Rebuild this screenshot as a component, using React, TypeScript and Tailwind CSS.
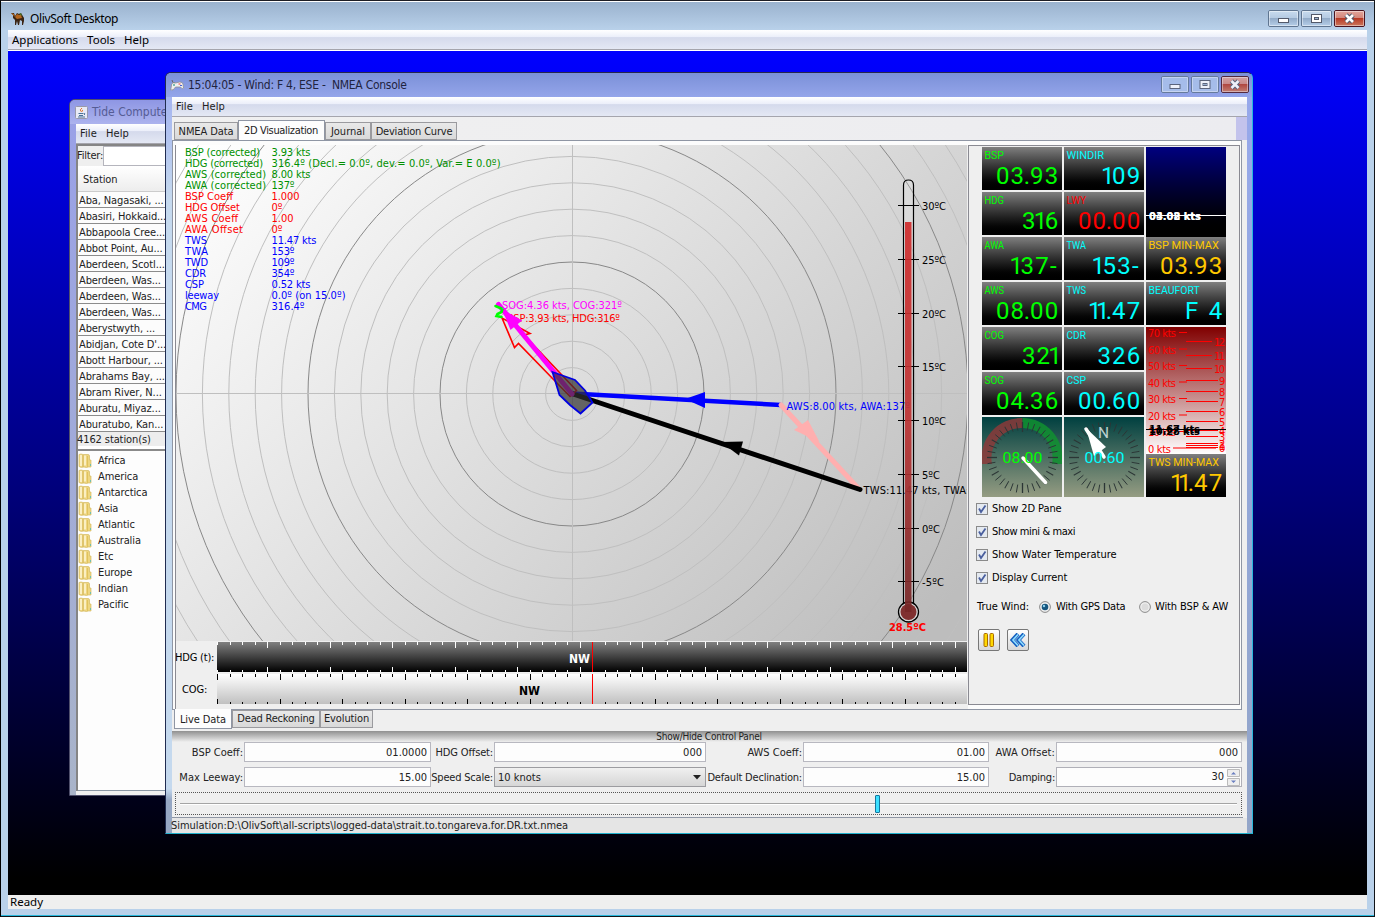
import React from "react";

const stations = [
  "Aba, Nagasaki, ...", "Abasiri, Hokkaid...", "Abbapoola Cree...", "Abbot Point, Au...", "Aberdeen, Scotl...",
  "Aberdeen, Was...", "Aberdeen, Was...", "Aberdeen, Was...", "Aberystwyth, ...", "Abidjan, Cote D'...",
  "Abott Harbour, ...", "Abrahams Bay, ...", "Abram River, N...", "Aburatu, Miyaz...", "Aburatubo, Kan...",
];
const regions = ["Africa", "America", "Antarctica", "Asia", "Atlantic", "Australia", "Etc", "Europe", "Indian", "Pacific"];

const readings: [string, string, string, number, number][] = [
  ["BSP (corrected)", "3.93 kts", "#009000", 75, 39],
  ["HDG (corrected)", "316.4º (Decl.= 0.0º, dev.= 0.0º, Var.= E 0.0º)", "#009000", 78, 229],
  ["AWS (corrected)", "8.00 kts", "#009000", 81, 39],
  ["AWA (corrected)", "137º", "#009000", 81, 23],
  ["BSP Coeff", "1.000", "#ff0000", 48, 28],
  ["HDG Offset", "0º", "#ff0000", 55, 11],
  ["AWS Coeff", "1.00", "#ff0000", 53, 22],
  ["AWA Offset", "0º", "#ff0000", 58, 11],
  ["TWS", "11.47 kts", "#0000ff", 22, 45],
  ["TWA", "153º", "#0000ff", 23, 23],
  ["TWD", "109º", "#0000ff", 23, 23],
  ["CDR", "354º", "#0000ff", 21, 23],
  ["CSP", "0.52 kts", "#0000ff", 19, 39],
  ["leeway", "0.0º (on 15.0º)", "#0000ff", 34, 74],
  ["CMG", "316.4º", "#0000ff", 22, 33],
];

const Camel = () => (
  <svg width="14" height="14" viewBox="0 0 14 14">
    <path d="M0 1l3 0 1 3 2-3 2 1 2-1 3 5v3l-1 4h-1l0-4-2-1-1 5H7L6 9 5 13H4L4 8 2 6 2 3z" fill="#3b2413" />
    <path d="M0 1l3 1 1 3 2-3 2 1 2 0 1 3-5 1z" fill="#b5651d" />
    <path d="M8 2l2-1 1 3z" fill="#4e7a2a" />
  </svg>
);
const Pad = () => (
  <svg width="14" height="13" viewBox="0 0 14 13">
    <path d="M2 1q0 3 3 3" fill="none" stroke="#666" />
    <path d="M.7 11l1-6q1-2 4-1l4-1q3 0 3.300 2l.5 4q-1 2-3-1l-5 0q-2 4-4.800 3z" fill="#f0f0f0" stroke="#8f8f8f" strokeWidth=".8" />
    <path d="M3 6h2M4 5v2" stroke="#5a9" />
    <path d="M8.500 5h2" stroke="#e33" /><path d="M10 6.500h2" stroke="#46d" />
  </svg>
);
const Java = () => (
  <svg width="13" height="13" viewBox="0 0 13 13">
    <rect x=".5" y=".5" width="12" height="12" rx="1" fill="#e8eaf6" stroke="#99a" />
    <path d="M7 2q-3 2-1 3.500M8 4q-2 1-1 2" stroke="#e0762d" fill="none" />
    <path d="M3.500 7.500h5M4 9.500h4M3 11h7M9 7.500q2 0 0 1.500" stroke="#4b7296" fill="none" />
  </svg>
);
const Folder = () => (
  <svg width="14" height="15" viewBox="0 0 14 15">
    <path d="M1 1.500q2-1 4 0h5q1.500 0 1.500 1.500v4h1.500v7h-3q-1 1-4 0-3 1-5-.5z" fill="#eed680" stroke="#d6bc64" strokeWidth=".7" />
    <path d="M5 2v12" stroke="#c9ac50" strokeWidth=".8" />
    <path d="M3 2v11M7 2.500v10" stroke="#fff8d8" strokeWidth="1.500" />
    <path d="M9.500 3v11" stroke="#e0c25e" />
    <path d="M12.500 11v2" stroke="#5bb" strokeWidth=".8" />
  </svg>
);

const WinButtons = ({ inner = false }: { inner?: boolean }) => (
  <svg width={inner ? 89 : 98} height="18" viewBox={inner ? "0 0 89 18" : "0 0 98 18"}>
    <defs>
      <linearGradient id="wb" x1="0" y1="0" x2="0" y2="1">
        <stop offset="0" stopColor="#c9dcef" /><stop offset=".48" stopColor="#b4cae2" /><stop offset=".5" stopColor="#93acc9" /><stop offset="1" stopColor="#b7d0ea" />
      </linearGradient>
      <linearGradient id="wr" x1="0" y1="0" x2="0" y2="1">
        <stop offset="0" stopColor="#e3a79d" /><stop offset=".48" stopColor="#d3857a" /><stop offset=".5" stopColor="#b83a25" /><stop offset="1" stopColor="#cd7c62" />
      </linearGradient>
    </defs>
    {(inner ? [0.5, 30.5, 60.5] : [0.5, 33.5, 66.5]).map((x, i) => {
      const w = inner ? 27 : 30;
      const c = x + w / 2;
      return (
        <g key={i} opacity={inner ? 0.85 : 1}>
          <rect x={x} y=".5" width={w} height="16" rx="1.500" fill={i === 2 ? "url(#wr)" : inner ? "#abc3ec" : "url(#wb)"} stroke={i === 2 ? "#4a1420" : "#5f7590"} />
          <rect x={x + 1} y="1.500" width={w - 2} height="14" fill="none" stroke="#fff" strokeOpacity=".45" />
          {i === 0 && <rect x={c - 5} y="8.500" width="10" height="4" fill="#fff" stroke="#535a6b" />}
          {i === 1 && <><rect x={c - 5} y="4.500" width="10" height="8" fill="#fff" stroke="#535a6b" /><rect x={c - 2} y="7.500" width="4" height="2" fill="#9db4d0" stroke="#535a6b" /></>}
          {i === 2 && <><path d={`M${c - 3.5} 5l7 7M${c + 3.5} 5l-7 7`} stroke="#535a6b" strokeWidth="4.600" /><path d={`M${c - 3.5} 5l7 7M${c + 3.5} 5l-7 7`} stroke="#fff" strokeWidth="2.600" /></>}
        </g>
      );
    })}
  </svg>
);

const temps = [30, 25, 20, 15, 10, 5, 0, -5];

const Plot = () => (
  <svg className="block" width="791" height="496" viewBox="176 145 791 496" fontSize="11" fontFamily="'DejaVu Sans Condensed','DejaVu Sans',sans-serif">
    <defs>
      <linearGradient id="bg" gradientUnits="userSpaceOnUse" x1="240" y1="100" x2="850" y2="700">
        <stop offset="0" stopColor="#ffffff" /><stop offset="1" stopColor="#bdbdbd" />
      </linearGradient>
      <linearGradient id="merc" x1="0" y1="0" x2="0" y2="1">
        <stop offset="0" stopColor="#d02c2c" /><stop offset=".5" stopColor="#bd3232" /><stop offset="1" stopColor="#752626" />
      </linearGradient>
    </defs>
    <rect x="176" y="145" width="791" height="496" fill="url(#bg)" />
    <g fill="none" stroke="#bfbfbf">
      {Array.from({ length: 18 }, (_, i) => <circle key={i} cx="572" cy="394" r={(i + 1) * 26.4} stroke={(i + 1) % 5 === 0 ? "#888" : "#bfbfbf"} />)}
      <path d="M176 393.500H967M572.500 145V641" />
    </g>
    {readings.map(([a, b, c, wa, wb], i) => (
      <g key={i} fill={c}>
        <text x="185" y={156 + i * 11} textLength={wa}>{a}</text>
        <text x="271.500" y={156 + i * 11} textLength={wb}>{b}</text>
      </g>
    ))}
    <path d="M572 393.500L781 405" stroke="#00f" strokeWidth="4.500" />
    <path d="M685 399l20-7v16z" fill="#00f" />
    <path d="M781 405L858 488" stroke="#ffafaf" strokeWidth="5" strokeLinecap="round" />
    <path d="M794 430l14-10 11.500 22z" fill="#ffafaf" />
    <path d="M573 394L860 489.500" stroke="#000" strokeWidth="5" strokeLinecap="round" />
    <path d="M721 442l22 -0.500-4 14z" fill="#000" />
    <text x="507" y="322" fill="#f00" textLength="113">BSP:3.93 kts, HDG:316º</text>
    <path d="M502 318L514.500 347.500L518.500 343.500L570 396.500L576.500 390.500L524 335L530 333.500L502 318Z" fill="none" stroke="#f00" strokeWidth="1.600" />
    <path d="M572 394L498.500 304.500" stroke="#f0f" strokeWidth="5" strokeLinecap="round" />
    <path d="M502 309l20 11.500-11.500 9.500z" fill="#f0f" />
    <path d="M495.500 306l7 3-1 3-4 2-1 2 5 1" fill="none" stroke="#0f0" strokeWidth="2.600" strokeLinecap="round" />
    <text x="502" y="309" fill="#f0f" textLength="120">SOG:4.36 kts, COG:321º</text>
    <text x="786.500" y="410" fill="#00f" textLength="123.500">AWS:8.00 kts, AWA:137º</text>
    <text x="863.500" y="494" textLength="130">TWS:11.47 kts, TWA:153º</text>
    <path d="M552.500 372L575 380L585 390.500L592.500 402.500L580.500 413.500L570 405L559.500 395Z" fill="#303030" fillOpacity=".7" stroke="#0000e0" strokeWidth="1.800" />
    <path d="M903.500 604V185q0-5 5-5t5 5V604" fill="#fff" fillOpacity=".15" stroke="#000" strokeWidth="1.200" />
    {temps.map((t, i) => (
      <g key={t}>
        <path d={`M898 ${Math.round(205 + i * 53.75) + 0.5}h21`} stroke="#000" />
        <text x="922" y={210 + i * 53.75} textLength={t < 0 ? 22 : t < 10 ? 18 : 24}>{t}ºC</text>
      </g>
    ))}
    <circle cx="908.500" cy="612" r="10" fill="#d8d8d8" stroke="#000" strokeWidth="1.300" />
    <circle cx="908.500" cy="612" r="8" fill="#803030" />
    <rect x="905" y="222" width="6.500" height="390" fill="url(#merc)" fillOpacity=".92" />
    <text x="889" y="631" fill="#f00" fontWeight="bold" textLength="37">28.5ºC</text>
  </svg>
);

const Compass = ({ dark = false }: { dark?: boolean }) => (
  <svg className="block" width="750" height={30} viewBox="0 0 750 30" shapeRendering="crispEdges">
    <defs>
      <linearGradient id={dark ? "cd" : "cl"} x1="0" y1="0" x2="0" y2="1">
        <stop offset="0" stopColor={dark ? "#808080" : "#fff"} /><stop offset="1" stopColor={dark ? "#000" : "#c0c0c0"} />
      </linearGradient>
    </defs>
    <rect width="750" height="30" fill={dark ? "url(#cd)" : "url(#cl)"} />
    {Array.from({ length: 60 }, (_, i) => {
      const big = i % 5 === (dark ? 4 : 0);
      const h = big ? 6 : 3;
      const x = Math.round(i * 12.5) + 0.5;
      return <path key={i} d={`M${x} 0v${h}M${x} 30v${-h + 1}`} stroke={dark ? "#fff" : "#000"} />;
    })}
    <rect x="375" y="0" width="1" height="30" fill="#ff0000" />
    <text x={dark ? 352 : 302} y="21" fontSize="12" fontWeight="bold" fontFamily="'DejaVu Sans Condensed','DejaVu Sans',sans-serif" fill={dark ? "#fff" : "#000"} textLength="21" lengthAdjust="spacingAndGlyphs">NW</text>
  </svg>
);

const slot = (ch: string) => (ch === "1" ? 8.2 : ch === "." ? 5 : ch === "-" ? 9.5 : ch === " " ? 9 : 14.6);
const nudge = (ch: string) => (ch === "1" ? -2.5 : ch === "." ? -1 : ch === "-" ? 0.5 : 0.3);

const Tile = ({ name, value, tone }: { name: string; value: string; tone: string }) => {
  const chars = value.split("");
  let x = 77 - chars.reduce((s, c) => s + slot(c), 0);
  const xs = chars.map((c) => {
    const at = x + nudge(c);
    x += slot(c);
    return at.toFixed(1);
  });
  return (
    <div className={`h-[43px] w-[80px] bg-linear-to-b from-[#808080] to-black font-[Roboto,sans-serif] ${tone}`}>
      <svg className="block" width="80" height="43" fill="currentColor">
        <text x="2.500" y="12" fontSize="11.500" textLength={name.length > 6 ? name.length * 6.4 : name.length * 6 + 1.5} lengthAdjust="spacingAndGlyphs">{name}</text>
        <text x={xs.join(" ")} y="37" fontSize="24">{value}</text>
      </svg>
    </div>
  );
};

const Gauge = ({ wind = false }: { wind?: boolean }) => (
  <svg className="block" width="80" height="80" viewBox="0 0 80 80">
    <defs>
      <linearGradient id="gg" x1="0" y1="0" x2="0" y2="1"><stop offset="0" stopColor="#004040" /><stop offset="1" stopColor="#959c82" /></linearGradient>
    </defs>
    <rect width="80" height="80" fill="url(#gg)" />
    {wind && <>
      <path d="M0 47A40 40 0 0 1 40.500 1V11A30 30 0 0 0 10 47z" fill="#8b3a3a" fillOpacity=".85" />
      <path d="M40.500 1A40 40 0 0 1 80 47H70A30 30 0 0 0 40.500 11z" fill="#109030" fillOpacity=".85" />
    </>}
    {Array.from({ length: 36 }, (_, i) => <path key={i} d={i % 9 === 0 ? "M40.5 5v10" : "M40.5 5v8"} stroke="#2b3535" strokeWidth={i % 9 === 0 ? 1.3 : 0.9} transform={`rotate(${i * 10} 40.5 40.5)`} />)}
    {!wind && <text x="34" y="21" fontSize="15.500" fontFamily="Roboto,sans-serif" fill="#bcd0d0" textLength="12">N</text>}
    {wind ? <path d="M41 41L63.500 65.500" stroke="#fff" strokeWidth="3.500" strokeLinecap="round" /> : <><path d="M22 11L42 30l-12 9z" fill="#fff" /><path d="M22 12L40 40" stroke="#fff" strokeWidth="3.500" strokeLinecap="round" /></>}
    <text x="20.500" y="45.500" fontSize="15" fontFamily="Roboto,sans-serif" fill={wind ? "#00ff00" : "#00ffff"} textLength="40" lengthAdjust="spacingAndGlyphs">{wind ? "08.00" : "00.60"}</text>
  </svg>
);

const beaufort = [121, 119, 117, 110, 104, 95, 85, 75, 65, 54, 42, 29, 15];
const WindScale = () => (
  <svg className="block" width="80" height="127" viewBox="0 0 80 127" fontSize="11" fontFamily="'DejaVu Sans Condensed','DejaVu Sans',sans-serif" fill="#f00">
    <defs><linearGradient id="ws" x1="0" y1="0" x2="0" y2="1"><stop offset="0" stopColor="#800000" /><stop offset="1" stopColor="#fff" /></linearGradient></defs>
    <rect width="80" height="127" fill="url(#ws)" />
    {[70, 60, 50, 40, 30, 20, 10, 0].map((k, i) => (
      <g key={k}>
        <text x="2" y={10 + i * 16.5} textLength={k ? 28 : 23}>{k} kts</text>
        <path d={`M${k ? 33 : 27} ${5.500 + i * 16.5}h${k ? 8 : 43}`} stroke="#f00" />
      </g>
    ))}
    {beaufort.map((y, i) => (
      <g key={i}>
        <path d={`M40 ${y - 0.5}h${i > 9 ? 26 : 32}`} stroke="#f00" />
        <text x={i > 9 ? 68 : 73} y={y + 4} textLength={i > 9 ? 11 : 6}>{i}</text>
      </g>
    ))}
    <path d="M0 102.500H80" stroke="#000" />
    <g fill="#000" fontWeight="bold">
      <text x="3" y="106" textLength="51">11.67 kts</text>
      <text x="3" y="108" textLength="51">10.28 kts</text>
    </g>
  </svg>
);

const Check = ({ label, track = "" }: { label: string; track?: string }) => (
  <div className="flex h-[23px] items-center gap-[4px]">
    <svg width="12" height="12" viewBox="0 0 12 12">
      <rect x=".5" y=".5" width="11" height="11" fill="#e4e9f0" stroke="#8a8a8a" />
      <path d="M3 5.500l2 3.500 4.500-6.500" fill="none" stroke="#4a5f9e" strokeWidth="1.800" />
    </svg>
    <span className={track}>{label}</span>
  </div>
);
const Radio = ({ on = false }: { on?: boolean }) => (
  <svg width="12" height="12" viewBox="0 0 12 12">
    <circle cx="6" cy="6" r="5.400" fill="#eee" stroke="#8a8a8a" />
    {on ? <><circle cx="6" cy="6" r="3.300" fill="#15557e" /><circle cx="5" cy="5" r="1.200" fill="#8cd0ee" /></> : <circle cx="6" cy="6" r="3.500" fill="#dcdcdc" />}
  </svg>
);

const Field = ({ value }: { value: string }) => (
  <div className="flex h-[20px] items-center justify-end border border-[#b8b8c0] bg-[#fdfdfd] pt-[1px] pr-[3px]">{value}</div>
);
const FLabel = ({ text, track = "" }: { text: string; track?: string }) => <span className={`pt-[1px] pr-[1px] text-right whitespace-nowrap ${track}`}>{text}</span>;

const Tab = ({ text, size, track = "" }: { text: string; size: string; track?: string }) => (
  <div className={`flex items-center justify-center whitespace-nowrap border border-[#9a9a9e] bg-linear-to-b from-[#e9e9e9] to-[#d9d9d9] ${size} ${track}`}>{text}</div>
);

const MenuBar = ({ items, className }: { items: string[]; className: string }) => (
  <div className={`flex shrink-0 items-center border-b border-[#a5a5ad] bg-[linear-gradient(#fff,#eceffa_35%,#d5daec_40%,#e4e8f4)] ${className}`}>
    {items.map((m) => <span key={m}>{m}</span>)}
  </div>
);

const TideWindow = () => (
  <div className="absolute top-[98px] left-[68px] flex h-[697px] w-[110px] flex-col overflow-hidden rounded-tl-[6px] border border-[#50506c] bg-linear-to-b from-[#99a0e8] to-[#a9b4c9]">
    <div className="flex h-[24px] shrink-0 items-center gap-[4px] bg-linear-to-b from-[#8e96e4] to-[#acb3ee] pl-[5px] text-[12px] tracking-[0px] whitespace-nowrap text-[#555c94]"><Java />Tide Computer</div>
    <div className="ml-[6px] flex min-h-0 grow flex-col bg-[#f0f0f0]">
      <MenuBar items={["File", "Help"]} className="h-[20px] gap-[9px] pl-[4px] tracking-[0.1px]" />
      <div className="mb-[4px] flex min-h-0 grow flex-col border-t-2 border-l-2 border-[#858585]">
        <div className="flex h-[20px] shrink-0 items-center bg-[#efefef] tracking-[-0.2px]"><span className="-ml-[1px] w-[28px]">Filter:</span><div className="h-[20px] w-[90px] border border-[#b5b5bd] bg-white" /></div>
        <div className="flex h-[26px] shrink-0 items-center border-b border-[#ccc] bg-linear-to-b from-white to-[#ededed] pt-[3px] pl-[5px] tracking-[-0.1px]">Station</div>
        {stations.map((s, i) => <div key={i} className="h-[16px] shrink-0 overflow-hidden border-b border-[#8c8c8c] bg-[#fcfcfc] pl-[1px] leading-[17px] tracking-[-0.12px] whitespace-nowrap">{s}</div>)}
        <div className="h-[14px] shrink-0 bg-[#ededed] leading-[15px] tracking-[-0.1px]"><span className="-ml-[1px]">4162 station(s)</span></div>
        <div className="h-[5px] shrink-0 border-b-2 border-[#8a8a8a] bg-white" />
        <div className="flex grow flex-col border-b border-[#8a96a4] bg-[#fdfdfd] pt-[1px]">
          {regions.map((r) => <div key={r} className="flex h-[16px] items-center gap-[6px] tracking-[-0.1px]"><Folder /><span className="pt-[1px]">{r}</span></div>)}
        </div>
      </div>
    </div>
  </div>
);

const SidePanel = () => (
  <div className="flex w-[272px] flex-col border border-[#8a8a92] bg-[#efefef] text-black">
    <div className="flex gap-[2px] pt-[1px] pl-[13px]">
      <div className="flex flex-col gap-[2px]">
        <Tile name="BSP" value="03.93" tone="text-[#00ff00]" />
        <Tile name="HDG" value="316" tone="text-[#00ff00]" />
        <Tile name="AWA" value="137-" tone="text-[#00ff00]" />
        <Tile name="AWS" value="08.00" tone="text-[#00ff00]" />
        <Tile name="COG" value="321" tone="text-[#00ff00]" />
        <Tile name="SOG" value="04.36" tone="text-[#00ff00]" />
        <Gauge wind />
      </div>
      <div className="flex flex-col gap-[2px]">
        <Tile name="WINDIR" value="109" tone="text-[#00ffff]" />
        <Tile name="LWY" value="00.00" tone="text-[#ff0000]" />
        <Tile name="TWA" value="153-" tone="text-[#00ffff]" />
        <Tile name="TWS" value="11.47" tone="text-[#00ffff]" />
        <Tile name="CDR" value="326" tone="text-[#00ffff]" />
        <Tile name="CSP" value="00.60" tone="text-[#00ffff]" />
        <Gauge />
      </div>
      <div className="flex flex-col">
        <svg className="block bg-linear-to-b from-[#000080] to-black" width="80" height="90" fontSize="11" fontWeight="bold" fontFamily="'DejaVu Sans Condensed','DejaVu Sans',sans-serif" fill="#fff">
          <path d="M0 68.500H80" stroke="#fff" />
          <text x="3" y="73" textLength="52">03.02 kts</text>
          <text x="3" y="73" textLength="52">04.08 kts</text>
        </svg>
        <Tile name="BSP MIN-MAX" value="03.93" tone="text-[#ffc800]" />
        <div className="h-[2px]" />
        <Tile name="BEAUFORT" value="F 4" tone="text-[#00ffff]" />
        <div className="h-[2px]" />
        <WindScale />
        <Tile name="TWS MIN-MAX" value="11.47" tone="text-[#ffc800]" />
      </div>
    </div>
    <div className="flex flex-col pl-[7px]">
      <Check label="Show 2D Pane" track="tracking-[-0.1px]" />
      <Check label="Show mini & maxi" track="tracking-[-0.4px]" />
      <Check label="Show Water Temperature" />
      <Check label="Display Current" track="tracking-[-0.1px]" />
    </div>
    <div className="flex h-[34px] items-center pt-[1px] pl-[8px] tracking-[-0.22px] whitespace-nowrap">
      <span className="w-[62px] tracking-[0px]">True Wind:</span><Radio on /><span className="w-[88px] pl-[5px]">With GPS Data</span><Radio /><span className="pl-[4px] tracking-[-0.1px]">With BSP &amp; AW</span>
    </div>
    <div className="flex gap-[7px] pt-[6px] pl-[9px]">
      <div className="flex h-[22px] w-[22px] items-center justify-center rounded-[2px] border border-[#777] bg-linear-to-b from-white to-[#d8d8d8]">
        <svg width="12" height="16" viewBox="0 0 12 16" fill="#ffd800" stroke="#a86a00"><rect x="1" y="1.500" width="3.500" height="13" rx="1" /><rect x="7" y="1.500" width="3.500" height="13" rx="1" /></svg>
      </div>
      <div className="flex h-[22px] w-[22px] items-center justify-center rounded-[2px] border border-[#777] bg-linear-to-b from-white to-[#d8d8d8]">
        <svg width="16" height="14" viewBox="0 0 16 14" fill="none" strokeLinejoin="miter"><path d="M8 1L2.500 7L8 13M14 1L8.500 7L14 13" stroke="#1560c0" strokeWidth="4" /><path d="M8 1.500L3 7L8 12.500M14 1.500L9 7L14 12.500" stroke="#8fdcff" strokeWidth="1.700" /></svg>
      </div>
    </div>
  </div>
);

const ConsoleWindow = () => (
  <div className="absolute top-[71px] left-[164px] flex h-[762px] w-[1088px] flex-col overflow-hidden rounded-t-[6px] border border-t-[#26264c] border-r-[#28b8dc] border-b-[#20b0cc] border-l-[#202c50] bg-[linear-gradient(#97a8ec,#93a8de_40%,#93a5c8)]">
    <div className="flex h-[24px] shrink-0 items-center bg-linear-to-b from-[#7b90d8] to-[#94a5ea] pr-[2px] pl-[4px] text-[12px] text-[#1f2440]">
      <Pad /><span className="grow pl-[4px] tracking-[-0.26px] whitespace-pre">15:04:05 - Wind: F 4, ESE -  NMEA Console</span><WinButtons inner />
    </div>
    <div className="flex min-h-0 grow">
      <div className="w-[6px] shrink-0 bg-[linear-gradient(#a4b4f0,#c5d9ee_14%,#c5d9ee_94%,#96a7c3_95.500%)]" />
      <div className="flex w-[1075px] shrink-0 flex-col bg-[#efefef]">
        <MenuBar items={["File", "Help"]} className="h-[20px] gap-[9px] pl-[4px] tracking-[0.1px]" />
        <div className="flex h-[23px] shrink-0 items-end bg-linear-to-r from-[#f0f0f0] to-[#ececf0] pl-[2px]">
          <Tab text="NMEA Data" size="h-[18px] w-[64px] pt-[1px]" track="tracking-[-0.1px]" />
          <div className="flex h-[20px] w-[87px] items-center justify-center border border-b-0 border-[#8f96a4] bg-[#fdfdfd] pr-[1px] tracking-[-0.35px] whitespace-nowrap">2D Visualization</div>
          <Tab text="Journal" size="h-[18px] w-[46px] pt-[1px]" track="tracking-[0px]" />
          <Tab text="Deviation Curve" size="h-[18px] w-[86px] pt-[1px]" track="tracking-[-0.2px]" />
          <div className="ml-auto h-[23px] w-[11px] bg-[#c3c3ec]" />
        </div>
        <div className="mr-[5px] flex h-[570px] shrink-0 border border-[#8f96a4] bg-[#fcfcfc] pt-[4px] pl-[2px]">
          <div className="flex w-[793px] shrink-0 flex-col border-l border-[#8a8a92] bg-[#efefef]">
            <Plot />
            <div className="flex h-[31px] items-end text-black"><span className="flex h-[30px] w-[41px] items-center tracking-[-0.2px] whitespace-nowrap"><span className="-ml-[1px] pt-[1px]">HDG (t):</span></span><Compass dark /></div>
            <div className="flex h-[32px] items-end text-black"><span className="flex h-[30px] w-[41px] items-center pt-[1px] pl-[6px] tracking-[-0.1px]">COG:</span><Compass /></div>
          </div>
          <div className="flex h-[560px]"><SidePanel /></div>
        </div>
        <div className="flex h-[21px] shrink-0 items-start pl-[2px]">
          <div className="-mt-[1px] flex h-[20px] w-[58px] items-center justify-center border border-t-0 border-[#8f96a4] bg-[#fdfdfd] pt-[3px] tracking-[-0.1px] whitespace-nowrap">Live Data</div>
          <Tab text="Dead Reckoning" size="h-[18px] w-[88px]" track="tracking-[-0.2px]" />
          <Tab text="Evolution" size="h-[18px] w-[53px]" track="tracking-[-0.1px]" />
        </div>
        <div className="flex h-[11px] shrink-0 items-center justify-center bg-linear-to-b from-[#909090] to-[#efefef] pr-[1px] text-[10px] tracking-[-0.2px]">Show/Hide Control Panel</div>
        <div className="grid shrink-0 grid-cols-[71px_187px_63px_212px_97px_186px_67px_186px] items-center gap-y-[5px] pl-[1px]">
          <FLabel text="BSP Coeff:" /><Field value="01.0000" />
          <FLabel text="HDG Offset:" track="tracking-[-0.15px]" /><Field value="000" />
          <FLabel text="AWS Coeff:" /><Field value="01.00" />
          <FLabel text="AWA Offset:" track="tracking-[0.1px]" /><Field value="000" />
          <FLabel text="Max Leeway:" /><Field value="15.00" />
          <FLabel text="Speed Scale:" track="tracking-[-0.2px]" />
          <div className="flex h-[20px] items-center justify-between border border-[#9c9ca0] bg-linear-to-b from-[#f0f0f0] to-[#d6d6d6] pt-[1px] pr-[4px] pl-[3px]">10 knots<svg width="8" height="5"><path d="M0 0h8L4 4.500z" fill="#222" /></svg></div>
          <FLabel text="Default Declination:" track="tracking-[-0.2px]" /><Field value="15.00" />
          <FLabel text="Damping:" track="tracking-[-0.25px]" />
          <div className="flex h-[20px] items-center justify-end gap-[3px] border border-[#b0b0b8] bg-[#fdfdfd] pr-[1px]">30
            <svg width="13" height="17" viewBox="0 0 13 17"><path d="M.5.5h12v7h-12zM.5 9.500h12v7h-12z" fill="#eee" stroke="#bbb" /><path d="M4 5.500L6.500 3L9 5.500zM4 11.500L6.500 14L9 11.500z" fill="#6a7fc0" /></svg>
          </div>
        </div>
        <div className="mt-[5px] mr-[5px] ml-[3px] flex h-[23px] shrink-0 items-center border border-dotted border-[#555] px-[4px]">
          <div className="h-[2px] w-[695px] border-t border-[#a5a5a5] bg-white" />
          <div className="h-[18px] w-[5px] rounded-[1px] border border-[#1478a0] bg-[#3ce0ff]" />
          <div className="h-[2px] grow border-t border-[#a5a5a5] bg-white" />
        </div>
        <div className="mt-[1px] mr-[4px] h-[2px] shrink-0 border-b border-[#8f96a4]" />
        <div className="flex grow items-center bg-[#e5e5e5] tracking-[-0.03px] whitespace-nowrap"><span className="-ml-[1px]">Simulation:D:\OlivSoft\all-scripts\logged-data\strait.to.tongareva.for.DR.txt.nmea</span></div>
      </div>
    </div>
  </div>
);

export default function App() {
  return (
    <div className="relative flex h-[917px] w-[1375px] flex-col overflow-hidden border border-t-[#1c1c24] border-r-[#101418] border-b-[#101418] border-l-black bg-[#b9d1ea] font-['DejaVu_Sans_Condensed','DejaVu_Sans',sans-serif] text-[11px] leading-[14px] text-[#222]">
      <div className="flex h-[29px] shrink-0 items-center border-t border-white bg-linear-to-b from-[#9ab2ce] to-[#b9d1ea] pt-[5px] pr-[8px] pl-[10px] font-['Noto_Sans',sans-serif] text-[12px] text-black">
        <Camel /><span className="grow pl-[5px] tracking-[-0.35px]">OlivSoft Desktop</span><WinButtons />
      </div>
      <MenuBar items={["Applications", "Tools", "Help"]} className="mx-[7px] h-[20px] gap-[9px] pl-[4px] font-['Noto_Sans',sans-serif] text-[11.5px] tracking-[0px] text-black" />
      <div className="mx-[7px] h-[845px] shrink-0 border-t border-white bg-[linear-gradient(#0000ff,#000080_50%,#000_98%)]" />
      <div className="mx-[7px] flex h-[14px] shrink-0 items-center bg-[#efefef] pl-[2px] font-['Noto_Sans',sans-serif] text-[11.5px] text-black">Ready</div>
      <div className="mt-[6px] h-px shrink-0 bg-[#28b8dc]" />
      <TideWindow />
      <ConsoleWindow />
    </div>
  );
}
